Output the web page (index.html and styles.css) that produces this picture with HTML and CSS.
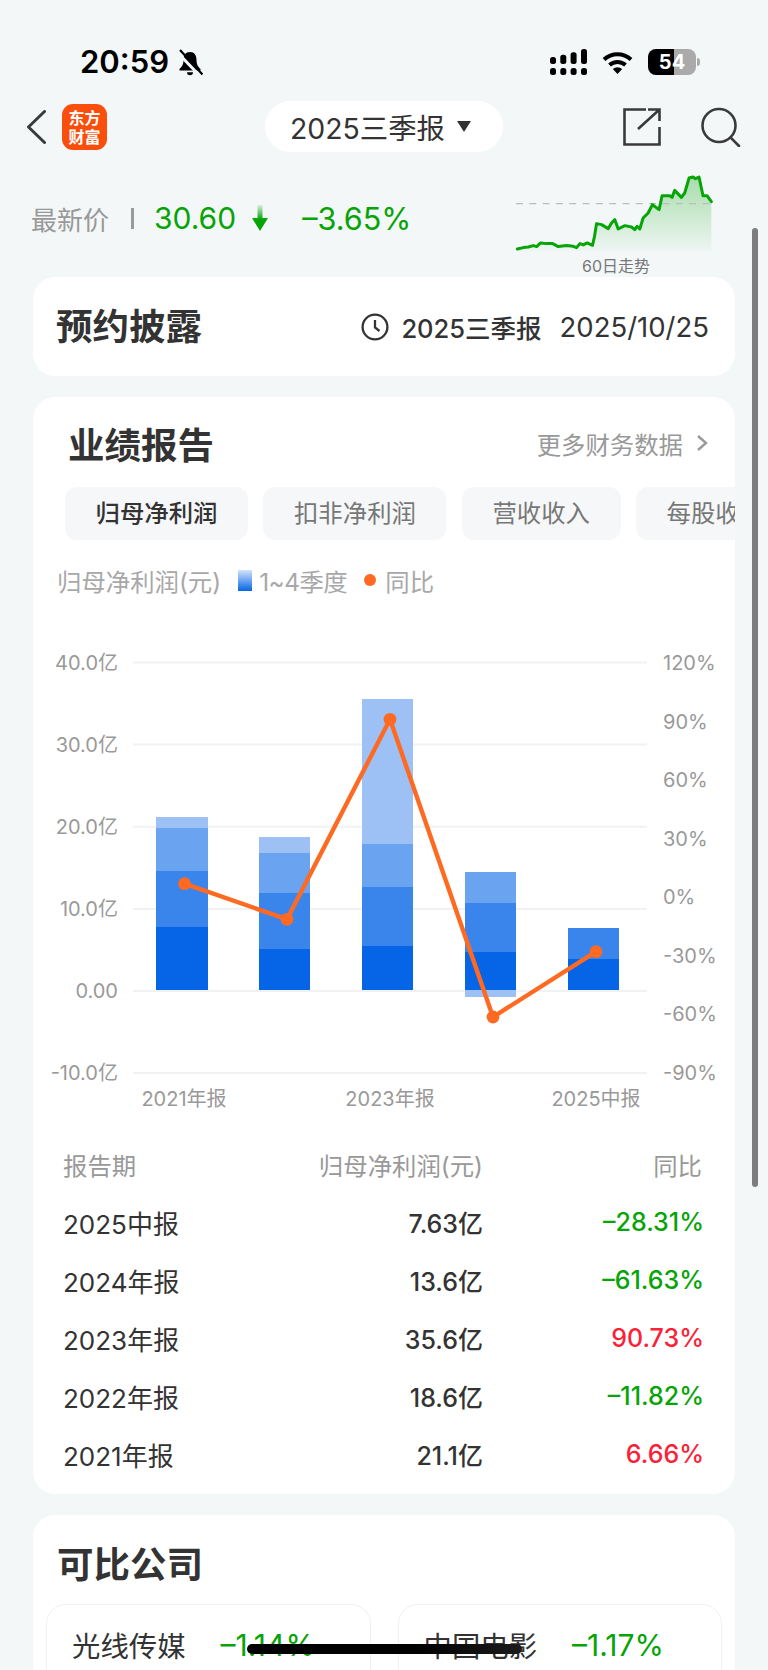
FILE: index.html
```html
<!DOCTYPE html>
<html lang="zh-CN">
<head>
  <meta charset="UTF-8">
  <meta name="viewport" content="width=device-width, initial-scale=1.0">
  <title>2025三季报</title>
  <link rel="stylesheet" href="styles.css">
</head>
<body>
  <!-- status bar -->
  <div class="status">
    <span class="time">20:59</span>
    <svg class="bell" viewBox="0 0 26 27" width="26" height="27">
      <path d="M13 3C8.5 3 6.5 6.5 6.5 11C6.5 16 4.5 18 2.5 20V21.5H23.5V20C21.5 18 19.5 16 19.5 11C19.5 6.5 17.5 3 13 3Z" fill="#000"/>
      <path d="M10 23.2a3 3 0 0 0 6 0z" fill="#000"/>
      <path d="M0 3L23 27" stroke="#f3f7f8" stroke-width="3"/>
      <path d="M3 1L25.5 25.5" stroke="#000" stroke-width="2.2"/>
    </svg>
    <div class="status-right">
      <svg viewBox="0 0 37 26" width="37" height="26">
        <rect x="0" y="8" width="6" height="7" rx="2.5"/>
        <rect x="10.3" y="5.7" width="6" height="9.3" rx="2.5"/>
        <rect x="20.6" y="3.3" width="6" height="11.7" rx="2.5"/>
        <rect x="31" y="0" width="6" height="15" rx="2.5"/>
        <rect x="0" y="19" width="6" height="7" rx="2.5"/>
        <rect x="10.3" y="19" width="6" height="7" rx="2.5"/>
        <rect x="20.6" y="19" width="6" height="7" rx="2.5"/>
        <rect x="31" y="19" width="6" height="7" rx="2.5"/>
      </svg>
      <svg viewBox="0 0 31 23" width="31" height="23">
        <path d="M2 8.5A20 20 0 0 1 29 8.5" fill="none" stroke="#000" stroke-width="4"/>
        <path d="M7.5 14A12 12 0 0 1 23.5 14" fill="none" stroke="#000" stroke-width="4"/>
        <path d="M15.5 23L10.8 18A7 7 0 0 1 20.2 18Z" fill="#000"/>
      </svg>
      <div class="battery">54</div>
      <div class="battery-tip"></div>
    </div>
  </div>

  <!-- nav -->
  <div class="nav">
    <div class="nav-left">
      <svg viewBox="0 0 19 34" width="19" height="34">
        <path d="M17.5 1.5L1.5 17L17.5 32.5" fill="none" stroke="#3a3a3a" stroke-width="3" stroke-linecap="round" stroke-linejoin="round"/>
      </svg>
      <div class="logo"><div>东方</div><div>财富</div></div>
    </div>
    <div class="pill">
      <span>2025三季报</span>
      <i class="triangle"></i>
    </div>
    <div class="nav-right">
      <svg viewBox="0 0 38 38" width="38" height="38">
        <path d="M23 1.5H1.5V36.5H36.5V19M15 21L36.5 1.5M25 1.5H36.5V13" fill="none" stroke="#3a3a3a" stroke-width="2.6"/>
      </svg>
      <svg viewBox="0 0 40 40" width="40" height="40">
        <circle cx="18" cy="18.5" r="16.5" fill="none" stroke="#3a3a3a" stroke-width="2.6"/>
        <path d="M29.7 30.7L38 39" fill="none" stroke="#3a3a3a" stroke-width="2.6" stroke-linecap="round"/>
      </svg>
    </div>
  </div>

  <!-- latest price -->
  <div class="price">
    <div class="price-left">
      <span class="price-label">最新价</span>
      <i class="price-sep"></i>
      <span class="green">30.60</span>
      <svg class="price-arrow" viewBox="0 0 18 27" width="18" height="27">
        <defs>
          <linearGradient id="arrowFade" x1="0" y1="0" x2="0" y2="1">
            <stop offset="0" stop-color="#06a406" stop-opacity="0.1"/>
            <stop offset="0.55" stop-color="#06a406"/>
          </linearGradient>
        </defs>
        <path d="M6.5 0H11.5V13H17L9 26L1 13H6.5Z" fill="url(#arrowFade)"/>
      </svg>
      <span class="green price-pct">–3.65%</span>
    </div>
    <div class="spark">
      <svg viewBox="48 430 592 237" width="197" height="79">
        <defs>
          <linearGradient id="sparkFill" x1="0" y1="0" x2="0" y2="1">
            <stop offset="0" stop-color="#06a406" stop-opacity="0.32"/>
            <stop offset="1" stop-color="#06a406" stop-opacity="0.02"/>
          </linearGradient>
        </defs>
        <path d="M52 658L70 654L85 652L100 648L110 651L122 640L140 642L158 642L175 651L200 648L220 650L230 654L240 642L250 646L262 640L278 647L284 620L290 582L305 585L325 597L335 580L345 570L355 598L375 588L395 592L405 600L412 590L420 598L430 565L445 550L458 525L478 540L487 498L510 498L517 503L525 482L545 503L555 490L568 445L580 442L587 447L598 442L610 498L622 498L635 516V665H52Z" fill="url(#sparkFill)"/>
        <path d="M48 522H640" stroke="#bdbdbd" stroke-width="4" stroke-dasharray="21 19"/>
        <polyline points="52,658 70,654 85,652 100,648 110,651 122,640 140,642 158,642 175,651 200,648 220,650 230,654 240,642 250,646 262,640 278,647 284,620 290,582 305,585 325,597 335,580 345,570 355,598 375,588 395,592 405,600 412,590 420,598 430,565 445,550 458,525 478,540 487,498 510,498 517,503 525,482 545,503 555,490 568,445 580,442 587,447 598,442 610,498 622,498 635,516" fill="none" stroke="#06a406" stroke-width="9" stroke-linejoin="round" stroke-linecap="round"/>
      </svg>
      <div class="spark-caption">60日走势</div>
    </div>
  </div>

  <!-- disclosure -->
  <div class="card card-disclose">
    <h2 class="card-title">预约披露</h2>
    <div class="disclose-info">
      <svg viewBox="0 0 28 28" width="28" height="28">
        <circle cx="14" cy="14" r="12.4" fill="none" stroke="#333" stroke-width="2.3"/>
        <path d="M14 7V14.5L18.5 18" fill="none" stroke="#333" stroke-width="2.3"/>
      </svg>
      <span class="disclose-name">2025三季报</span>
      <span class="disclose-date">2025/10/25</span>
    </div>
  </div>

  <!-- results -->
  <div class="card card-report">
    <div class="report-head">
      <h2 class="card-title">业绩报告</h2>
      <div class="more">
        <span>更多财务数据</span>
        <svg viewBox="0 0 12 18" width="12" height="18">
          <path d="M2 2L10 9L2 16" fill="none" stroke="#999" stroke-width="2.4"/>
        </svg>
      </div>
    </div>

    <div class="tabs">
      <div class="tab active">归母净利润</div>
      <div class="tab">扣非净利润</div>
      <div class="tab">营收收入</div>
      <div class="tab">每股收益</div>
    </div>

    <div class="legend">
      <span>归母净利润(元)</span>
      <i class="legend-bar"></i>
      <span class="legend-q">1~4季度</span>
      <i class="legend-dot"></i>
      <span>同比</span>
    </div>

    <svg class="chart" viewBox="33 640 702 485" width="702" height="485">
      <g class="grid">
        <path d="M133 662.5H647"/>
        <path d="M133 744.5H647"/>
        <path d="M133 826.7H647"/>
        <path d="M133 909H647"/>
        <path d="M133 991H647"/>
        <path d="M133 1073H647"/>
      </g>
      <g class="axis-left">
        <text x="118" y="663">40.0亿</text>
        <text x="118" y="745">30.0亿</text>
        <text x="118" y="827">20.0亿</text>
        <text x="118" y="909">10.0亿</text>
        <text x="118" y="991">0.00</text>
        <text x="118" y="1073">-10.0亿</text>
      </g>
      <g class="axis-right">
        <text x="663" y="663">120%</text>
        <text x="663" y="722">90%</text>
        <text x="663" y="780">60%</text>
        <text x="663" y="839">30%</text>
        <text x="663" y="897">0%</text>
        <text x="663" y="956">-30%</text>
        <text x="663" y="1014">-60%</text>
        <text x="663" y="1073">-90%</text>
      </g>
      <g class="axis-bottom">
        <text x="184" y="1099">2021年报</text>
        <text x="390" y="1099">2023年报</text>
        <text x="596" y="1099">2025中报</text>
      </g>
      <!-- 2021 -->
      <rect class="q4" x="156" y="817" width="52" height="11"/>
      <rect class="q3" x="156" y="828" width="52" height="43"/>
      <rect class="q2" x="156" y="871" width="52" height="56"/>
      <rect class="q1" x="156" y="927" width="52" height="63"/>
      <!-- 2022 -->
      <rect class="q4" x="259" y="837" width="51" height="16"/>
      <rect class="q3" x="259" y="853" width="51" height="40"/>
      <rect class="q2" x="259" y="893" width="51" height="56"/>
      <rect class="q1" x="259" y="949" width="51" height="41"/>
      <!-- 2023 -->
      <rect class="q4" x="362" y="699" width="51" height="145"/>
      <rect class="q3" x="362" y="844" width="51" height="43"/>
      <rect class="q2" x="362" y="887" width="51" height="59"/>
      <rect class="q1" x="362" y="946" width="51" height="44"/>
      <!-- 2024 -->
      <rect class="q3" x="465" y="872" width="51" height="31"/>
      <rect class="q2" x="465" y="903" width="51" height="49"/>
      <rect class="q1" x="465" y="952" width="51" height="38"/>
      <rect class="q4" x="465" y="990" width="51" height="7"/>
      <!-- 2025 -->
      <rect class="q2" x="568" y="928" width="51" height="31"/>
      <rect class="q1" x="568" y="959" width="51" height="31"/>

      <polyline class="yoy" points="184.5,883.7 287,919.3 390,719.3 493,1017 596,951.7"/>
      <circle class="yoy-dot" cx="184.5" cy="883.7" r="6.4"/>
      <circle class="yoy-dot" cx="287" cy="919.3" r="6.4"/>
      <circle class="yoy-dot" cx="390" cy="719.3" r="6.4"/>
      <circle class="yoy-dot" cx="493" cy="1017" r="6.4"/>
      <circle class="yoy-dot" cx="596" cy="951.7" r="6.4"/>
    </svg>

    <div class="table">
      <div class="row head"><span>报告期</span><span>归母净利润(元)</span><span>同比</span></div>
      <div class="row"><span>2025中报</span><span class="val">7.63亿</span><span class="pct green">–28.31%</span></div>
      <div class="row"><span>2024年报</span><span class="val">13.6亿</span><span class="pct green">–61.63%</span></div>
      <div class="row"><span>2023年报</span><span class="val">35.6亿</span><span class="pct red">90.73%</span></div>
      <div class="row"><span>2022年报</span><span class="val">18.6亿</span><span class="pct green">–11.82%</span></div>
      <div class="row"><span>2021年报</span><span class="val">21.1亿</span><span class="pct red">6.66%</span></div>
    </div>
  </div>

  <!-- comparable companies -->
  <div class="card card-peers">
    <h2 class="card-title">可比公司</h2>
    <div class="peers">
      <div class="peer"><span>光线传媒</span><span class="green peer-pct">–1.14%</span></div>
      <div class="peer"><span>中国电影</span><span class="green peer-pct">–1.17%</span></div>
    </div>
  </div>

  <div class="scrollbar"></div>
  <div class="home-bar"></div>
</body>
</html>
```

FILE: styles.css
```css
* {
  box-sizing: border-box;
}

body {
  margin: 0;
  height: 1670px;
  overflow: hidden;
  position: relative;
  background: #f3f7f8;
  color: #333;
  font-family: Inter, "Noto Sans CJK SC", sans-serif;
}

.green {
  color: #06a406;
}

.red {
  color: #fb2238;
}

/* status bar */
.status {
  display: flex;
  align-items: center;
  height: 80px;
  padding: 44px 68px 0 80px;
  color: #000;
}

.time {
  font-size: 31px;
  font-weight: 600;
  line-height: 36px;
}

.bell {
  margin-left: 8px;
}

.status-right {
  margin-left: auto;
  display: flex;
  align-items: center;
  gap: 15px;
}

.battery {
  width: 48px;
  height: 26px;
  border-radius: 8px;
  background: linear-gradient(to right, #000 54%, #aaa 54%);
  color: #fff;
  font-size: 20px;
  font-weight: 700;
  line-height: 26px;
  text-align: center;
}

.battery-tip {
  width: 3px;
  height: 8px;
  margin-left: -14px;
  background: #aaa;
  border-radius: 0 3px 3px 0;
}

/* nav */
.nav {
  display: grid;
  grid-template-columns: 1fr auto 1fr;
  align-items: center;
  height: 51px;
  margin-top: 21px;
  padding: 0 27px;
}

.nav-left {
  display: flex;
  align-items: center;
  gap: 16px;
}

.logo {
  width: 45px;
  height: 46px;
  border-radius: 11px;
  background: #f94e0c;
  color: #fff;
  font-family: "Noto Sans CJK SC", sans-serif;
  font-size: 16px;
  font-weight: 700;
  line-height: 19px;
  text-align: center;
  padding-top: 4px;
}

.pill {
  display: flex;
  align-items: center;
  gap: 12px;
  height: 51px;
  width: 238px;
  padding-left: 25px;
  border-radius: 26px;
  background: #fff;
  font-size: 28.4px;
}

.triangle {
  width: 0;
  height: 0;
  border-left: 7px solid transparent;
  border-right: 7px solid transparent;
  border-top: 11px solid #333;
}

.nav-right {
  display: flex;
  justify-content: flex-end;
  align-items: center;
  gap: 40px;
}

/* price */
.price {
  display: flex;
  height: 125px;
  padding: 21px 55px 0 31px;
}

.price-left {
  display: flex;
  align-items: center;
  height: 30px;
  margin-top: 30px;
  font-size: 30px;
}

.price-label {
  font-size: 26px;
  color: #999;
}

.price-sep {
  width: 3px;
  height: 21px;
  margin: 0 20px 0 22px;
  background: #999;
}

.price-arrow {
  margin: 0 33px 0 15px;
}

.price-pct {
  font-size: 30.6px;
}

.spark {
  margin-left: auto;
  width: 197px;
}

.spark svg {
  display: block;
}

.spark-caption {
  height: 25px;
  line-height: 28px;
  font-size: 16px;
  color: #777;
  text-align: center;
  padding-left: 3px;
}

/* cards */
.card {
  margin: 0 33px 21px;
  background: #fff;
  border-radius: 22px;
  overflow: hidden;
}

.card-title {
  margin: 0;
  font-size: 36.5px;
  font-weight: 700;
  line-height: 48px;
  color: #333;
}

.card-disclose {
  display: flex;
  align-items: center;
  justify-content: space-between;
  height: 99px;
  padding: 0 26px 0 23px;
}

.disclose-info {
  display: flex;
  align-items: center;
}

.disclose-name {
  margin: 0 18px 0 12px;
  font-size: 25.5px;
  font-weight: 500;
}

.disclose-date {
  font-size: 27.5px;
}

.card-report {
  height: 1097px;
  padding-top: 25px;
}

.report-head {
  display: flex;
  align-items: center;
  justify-content: space-between;
  padding: 0 27px 0 35px;
}

.more {
  display: flex;
  align-items: center;
  gap: 13px;
  margin-bottom: 6px;
  font-size: 24.4px;
  color: #999;
}

.tabs {
  display: flex;
  gap: 15.5px;
  margin-top: 17px;
  padding-left: 32px;
}

.tab {
  flex: none;
  height: 53px;
  padding: 0 30.5px;
  border-radius: 12px;
  background: #f6f7f9;
  color: #777;
  font-size: 24.4px;
  line-height: 53px;
}

.tab.active {
  color: #333;
  font-weight: 500;
}

.legend {
  display: flex;
  align-items: center;
  height: 30px;
  margin: 25px 0 45px 24px;
  font-size: 24.4px;
  color: #a8a8a8;
}

.legend-bar {
  width: 14px;
  height: 21px;
  margin: 0 7px 0 17px;
  background: linear-gradient(#d3e3fb, #0665e6);
}

.legend-q {
  letter-spacing: -0.5px;
}

.legend-dot {
  width: 12px;
  height: 12px;
  margin: 0 9px 0 17px;
  border-radius: 50%;
  background: #ff6a22;
}

/* chart */
.chart {
  display: block;
}

.chart text {
  font-size: 20px;
  fill: #999;
  dominant-baseline: central;
}

.grid path {
  stroke: #f1f2f4;
  stroke-width: 2;
  fill: none;
}

.axis-left text {
  text-anchor: end;
}

.axis-bottom text {
  text-anchor: middle;
}

.q1 {
  fill: #0665e6;
}

.q2 {
  fill: #3a85ec;
}

.q3 {
  fill: #6aa3ef;
}

.q4 {
  fill: #9dc1f4;
}

.yoy {
  fill: none;
  stroke: #ff6a22;
  stroke-width: 4.4;
}

.yoy-dot {
  fill: #ff6a22;
}

/* table */
.table {
  margin-top: 10px;
  padding: 0 33px 0 30px;
}

.row {
  display: grid;
  grid-template-columns: 1fr 190px 219px;
  align-items: center;
  height: 58px;
  font-size: 26px;
}

.row span:nth-child(n+2) {
  text-align: right;
}

.row .val {
  font-size: 25px;
  font-weight: 500;
}

.row .pct {
  font-size: 25px;
  font-weight: 500;
  margin-right: -2px;
}

.row.head {
  font-size: 24.4px;
  color: #999;
  white-space: nowrap;
}

/* peers */
.card-peers {
  height: 300px;
  padding: 26px 13px 0;
}

.card-peers .card-title {
  margin-left: 11px;
}

.peers {
  display: grid;
  grid-template-columns: 1fr 1fr;
  gap: 27px;
  margin-top: 15px;
}

.peer {
  display: flex;
  align-items: center;
  gap: 35px;
  height: 120px;
  padding: 0 0 39px 25px;
  border: 1px solid #f0f0f0;
  border-radius: 20px;
  font-size: 28.4px;
}

.peer-pct {
  font-size: 30px;
}

/* overlays */
.scrollbar {
  position: absolute;
  left: 752px;
  top: 228px;
  width: 6px;
  height: 959px;
  border-radius: 3px;
  background: #7d7d7d;
}

.home-bar {
  position: absolute;
  left: 247px;
  top: 1644px;
  width: 275px;
  height: 10px;
  border-radius: 5px;
  background: linear-gradient(to right, #000 60%, #1c1c1c);
}
```
